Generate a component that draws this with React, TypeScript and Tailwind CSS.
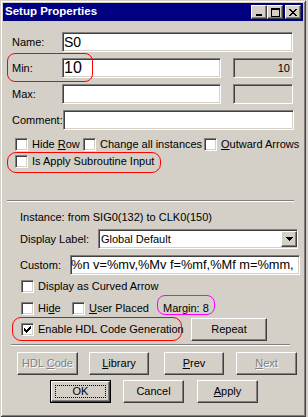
import React from 'react';

// classic 3D edges
const sunken =
  'border border-t-[#808080] border-l-[#808080] border-r-white border-b-white shadow-[inset_1px_1px_0_#404040,inset_-1px_-1px_0_#d4d0c8]';
const raised =
  'border border-t-white border-l-white border-r-[#404040] border-b-[#404040] shadow-[inset_-1px_-1px_0_#808080]';

function Check({ checked = false }: { checked?: boolean }) {
  return (
    <span className={`w-[13px] h-[13px] shrink-0 bg-white flex items-center justify-center ${sunken}`}>
      {checked && (
        <svg width="7" height="7" viewBox="0 0 7 7" shapeRendering="crispEdges">
          <path
            d="M6 0h1v1h-1z M5 1h2v1h-2z M0 2h1v1h-1z M4 2h3v1h-3z M0 3h2v1h-2z M3 3h3v1h-3z M0 4h5v1h-5z M1 5h3v1h-3z M2 6h1v1h-1z"
            fill="#000"
          />
        </svg>
      )}
    </span>
  );
}

function Btn({
  children,
  className = '',
  disabled = false,
  isDefault = false,
}: {
  children: React.ReactNode;
  className?: string;
  disabled?: boolean;
  isDefault?: boolean;
}) {
  const text = disabled ? 'text-[#808080] [text-shadow:1px_1px_0_#fff]' : 'text-black';
  if (isDefault) {
    return (
      <div className={`h-[23px] border border-black ${className}`}>
        <div className={`h-full w-full bg-[#d4d0c8] ${raised} flex items-center justify-center`}>
          <div className="w-[51px] h-[13px] border border-dotted border-black flex items-center justify-center">
            <span className={text}>{children}</span>
          </div>
        </div>
      </div>
    );
  }
  return (
    <div className={`h-[23px] bg-[#d4d0c8] ${raised} flex items-center justify-center ${className}`}>
      <span className={text}>{children}</span>
    </div>
  );
}

function TitleBtn({ children, className = '' }: { children: React.ReactNode; className?: string }) {
  return (
    <div className={`w-[16px] h-[14px] bg-[#d4d0c8] ${raised} flex items-center justify-center ${className}`}>
      {children}
    </div>
  );
}

export default function App() {
  return (
    <div className="w-[308px] h-[417px] bg-[#d4d0c8] overflow-hidden font-['Liberation_Sans',Arial,sans-serif] text-[11px] text-black leading-none">
      <div className="relative w-[306px] h-[417px] p-[3px] flex flex-col shadow-[inset_1px_1px_0_#d4d0c8,inset_-1px_-1px_0_#404040,inset_2px_2px_0_#ffffff,inset_-2px_-2px_0_#808080]">
        {/* Title bar */}
        <div className="h-[18px] shrink-0 bg-[#000080] flex items-center pl-[2px] pr-[2px]">
          <span className="text-white font-bold text-[11.5px]">Setup Properties</span>
          <div className="ml-auto flex items-center">
            <TitleBtn>
              <svg width="8" height="8" viewBox="0 0 8 8" shapeRendering="crispEdges">
                <rect x="1" y="6" width="6" height="2" fill="#000" />
              </svg>
            </TitleBtn>
            <TitleBtn>
              <svg width="9" height="9" viewBox="0 0 9 9" shapeRendering="crispEdges">
                <rect x="0.5" y="0.5" width="8" height="8" fill="none" stroke="#000" />
                <rect x="0" y="1" width="9" height="1" fill="#000" />
              </svg>
            </TitleBtn>
            <TitleBtn className="ml-[2px]">
              <svg width="8" height="7" viewBox="0 0 8 7" shapeRendering="crispEdges">
                <path
                  d="M0 0h2v1h-2z M6 0h2v1h-2z M1 1h2v1h-2z M5 1h2v1h-2z M2 2h4v1h-4z M3 3h2v1h-2z M2 4h4v1h-4z M1 5h2v1h-2z M5 5h2v1h-2z M0 6h2v1h-2z M6 6h2v1h-2z"
                  fill="#000"
                />
              </svg>
            </TitleBtn>
          </div>
        </div>

        {/* Body */}
        <div className="flex flex-col">
          <div className="flex items-center h-[20px] mt-[11px] ml-[9px]">
            <span className="w-[50px]">Name:</span>
            <div className={`w-[231px] h-[20px] bg-white ${sunken} flex items-center pl-[1px] text-[14px]`}>S0</div>
          </div>
          <div className="flex items-center h-[20px] mt-[6px] ml-[9px]">
            <span className="w-[50px]">Min:</span>
            <div className={`w-[159px] h-[20px] bg-white ${sunken} flex items-center pl-[1px] text-[16px]`}>10</div>
            <div className={`ml-[12px] w-[60px] h-[20px] bg-[#d4d0c8] ${sunken} flex items-center justify-end pr-[2px]`}>10</div>
          </div>
          <div className="flex items-center h-[20px] mt-[6px] ml-[9px]">
            <span className="w-[50px]">Max:</span>
            <div className={`w-[159px] h-[20px] bg-white ${sunken}`} />
            <div className={`ml-[12px] w-[60px] h-[20px] bg-[#d4d0c8] ${sunken}`} />
          </div>
          <div className="flex items-center h-[20px] mt-[6px] ml-[9px]">
            <span className="w-[51px]">Comment:</span>
            <div className={`w-[231px] h-[20px] bg-white ${sunken}`} />
          </div>

          <div className="flex items-center h-[13px] mt-[8px] ml-[12px]">
            <div className="w-[68px] flex items-center">
              <Check />
              <span className="ml-[4px]">
                Hide <u>R</u>ow
              </span>
            </div>
            <div className="w-[121px] flex items-center">
              <Check />
              <span className="ml-[4px]">Change all instances</span>
            </div>
            <div className="flex items-center">
              <Check />
              <span className="ml-[4px] whitespace-nowrap">
                <u>O</u>utward Arrows
              </span>
            </div>
          </div>
          <div className="flex items-center h-[13px] mt-[4px] ml-[12px]">
            <Check />
            <span className="ml-[4px]">Is Apply Subroutine Input</span>
          </div>

          <div className="mt-[32px] ml-[4px] w-[287px] h-[2px] border-t border-t-[#808080] border-b border-b-white" />

          <div className="h-[13px] mt-[9px] ml-[17px] flex items-center">Instance: from SIG0(132) to CLK0(150)</div>

          <div className="flex items-center h-[20px] mt-[5px] ml-[17px]">
            <span className="w-[78px]">Display Label:</span>
            <div className={`w-[200px] h-[20px] bg-white ${sunken} flex items-center`}>
              <span className="pl-[2px]">Global Default</span>
              <div className={`ml-auto w-[16px] h-[16px] bg-[#d4d0c8] ${raised} flex items-center justify-center`}>
                <svg width="7" height="4" viewBox="0 0 7 4" shapeRendering="crispEdges">
                  <path d="M0 0h7v1h-7z M1 1h5v1h-5z M2 2h3v1h-3z M3 3h1v1h-1z" fill="#000" />
                </svg>
              </div>
            </div>
          </div>

          <div className="flex items-center h-[20px] mt-[6px] ml-[17px]">
            <span className="w-[50px]">Custom:</span>
            <div className={`w-[230px] h-[20px] bg-white ${sunken} flex items-center overflow-hidden whitespace-nowrap text-[12.8px]`}>
              %n v=%mv,%Mv f=%mf,%Mf m=%mm,
            </div>
          </div>

          <div className="flex items-center h-[13px] mt-[5px] ml-[18px]">
            <Check />
            <span className="ml-[4px]">Display as Curved Arrow</span>
          </div>

          <div className="flex items-center h-[13px] mt-[9px] ml-[18px]">
            <div className="w-[51px] flex items-center">
              <Check />
              <span className="ml-[4px]">
                Hi<u>d</u>e
              </span>
            </div>
            <div className="w-[85px] flex items-center">
              <Check />
              <span className="ml-[4px]">
                <u>U</u>ser Placed
              </span>
            </div>
            <span className="ml-[6px]">Margin: 8</span>
          </div>

          <div className="flex items-center h-[23px] mt-[3px] ml-[18px]">
            <div className="w-[170px] flex items-center">
              <Check checked />
              <span className="ml-[4px]">Enable HDL Code Generation</span>
            </div>
            <Btn className="w-[76px]">Repeat</Btn>
          </div>

          <div className="mt-[3px] ml-[8px] w-[279px] h-[2px] border-t border-t-[#808080] border-b border-b-white" />

          <div className="flex items-center mt-[6px] ml-[14px]">
            <Btn className="w-[61px]" disabled>
              HDL <u>C</u>ode
            </Btn>
            <Btn className="w-[60px] ml-[11px]">
              <u>L</u>ibrary
            </Btn>
            <Btn className="w-[60px] ml-[15px]">
              <u>P</u>rev
            </Btn>
            <Btn className="w-[61px] ml-[12px]" disabled>
              <u>N</u>ext
            </Btn>
          </div>

          <div className="flex items-center mt-[5px] ml-[47px]">
            <Btn className="w-[61px]" isDefault>
              OK
            </Btn>
            <Btn className="w-[61px] ml-[12px]">Cancel</Btn>
            <Btn className="w-[61px] ml-[13px]">
              <u>A</u>pply
            </Btn>
          </div>
        </div>

        {/* annotation marks drawn over the dialog */}
        <div className="absolute left-[7px] top-[53px] w-[86px] h-[29px] rounded-[8px] border border-[#ff0000]" />
        <div className="absolute left-[7px] top-[152px] w-[154px] h-[21px] rounded-[9px] border border-[#ff0000]" />
        <div className="absolute left-[157px] top-[295px] w-[58px] h-[20px] rounded-[8px] border border-[#ff00ff]" />
        <div className="absolute left-[12px] top-[317px] w-[170px] h-[24px] rounded-[9px] border border-[#ff0000]" />
      </div>
    </div>
  );
}
